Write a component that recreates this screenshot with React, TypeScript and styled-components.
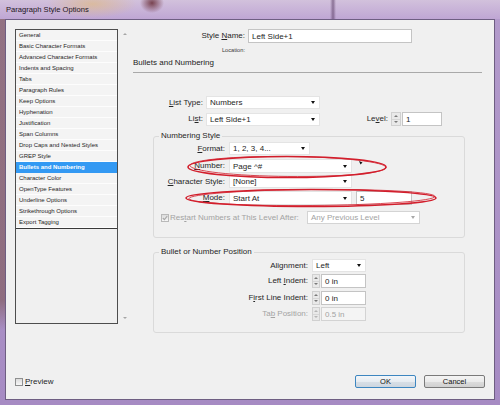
import React from 'react'
import styled, { createGlobalStyle } from 'styled-components'

const GlobalStyle = createGlobalStyle`
  html, body {
    margin: 0;
    padding: 0;
    background: #ffffff;
  }
  body {
    font-family: "Liberation Sans", Arial, sans-serif;
  }
  * {
    box-sizing: border-box;
  }
`

const Window = styled.div`
  position: relative;
  width: 500px;
  height: 405px;
  display: flex;
  flex-direction: column;
  overflow: hidden;
  background:
    linear-gradient(180deg, rgba(120, 80, 70, 0.55) 0px, rgba(120, 80, 70, 0.55) 300px, rgba(120, 80, 70, 0) 330px) left top / 5px 100% no-repeat,
    linear-gradient(180deg, #b39bcb 0%, #a68bc3 100%);
`

const TitleBar = styled.div`
  height: 19px;
  flex-shrink: 0;
  display: flex;
  align-items: center;
  padding-left: 6px;
  font-size: 7.6px;
  color: #1d1420;
  background:
    radial-gradient(ellipse 12px 10px at 152px 3px, rgba(105, 45, 55, 0.85), rgba(105, 45, 55, 0) 100%),
    radial-gradient(ellipse 45px 14px at 92px 4px, rgba(222, 186, 140, 0.75), rgba(222, 186, 140, 0) 100%),
    linear-gradient(90deg, rgba(80, 50, 90, 0) 330px, rgba(80, 50, 90, 0.55) 333px, rgba(80, 50, 90, 0) 336px),
    linear-gradient(180deg, #d2c1dc 0%, #bfa6d4 100%);
`

const Frame = styled.div`
  flex: 1;
  display: flex;
  padding: 0 5px 5px 5px;
`

const Client = styled.div`
  flex: 1;
  display: flex;
  flex-direction: column;
  background: #f0f0f0;
  border: 1px solid #6e5e82;
  padding: 9px 9px 11px 9px;
`

const Main = styled.div`
  flex: 1;
  display: flex;
  align-items: flex-start;
`

/* category list on the left */

const ListColumn = styled.div`
  width: 116px;
  height: 295px;
  display: flex;
  flex-shrink: 0;
`

const ListBox = styled.div`
  width: 103px;
  height: 100%;
  border: 1px solid #4d4d4d;
  background: #f0f0f0;
`

const ListItems = styled.div`
  border-bottom: 1px solid #3a3a3a;
`

const ListItem = styled.div<{ $active?: boolean }>`
  height: 11px;
  line-height: 11px;
  padding-left: 3px;
  font-size: 6px;
  white-space: nowrap;
  overflow: hidden;
  color: ${p => (p.$active ? '#ffffff' : '#1e1e1e')};
  font-weight: ${p => (p.$active ? 700 : 400)};
  background: ${p => (p.$active ? '#3399f3' : '#f4f4f4')};
  box-shadow: inset 0 -1px 0 ${p => (p.$active ? '#3399f3' : '#fdfdfd')};
`

const ScrollTrack = styled.div`
  width: 13px;
  height: 100%;
  display: flex;
  flex-direction: column;
  align-items: center;
  justify-content: space-between;
  padding: 4px 0 5px 0;
`

const ScrollArrow = styled.span<{ $down?: boolean }>`
  width: 0;
  height: 0;
  border-left: 2px solid transparent;
  border-right: 2px solid transparent;
  ${p => (p.$down ? 'border-top' : 'border-bottom')}: 2px solid #a5a5a5;
`

/* form on the right */

const Panel = styled.div`
  width: 349px;
  margin-left: 2px;
  display: flex;
  flex-direction: column;
`

const Row = styled.div<{ $mt?: number; $gap?: number; $pl?: number }>`
  display: flex;
  align-items: center;
  margin-top: ${p => p.$mt ?? 0}px;
  gap: ${p => p.$gap ?? 3}px;
  padding-left: ${p => p.$pl ?? 0}px;
`

const Label = styled.span<{ $w?: number; $muted?: boolean; $left?: boolean; $ml?: number }>`
  width: ${p => (p.$w ? `${p.$w}px` : 'auto')};
  margin-left: ${p => p.$ml ?? 0}px;
  flex-shrink: 0;
  text-align: ${p => (p.$left ? 'left' : 'right')};
  font-size: 8px;
  line-height: 10px;
  white-space: nowrap;
  color: ${p => (p.$muted ? '#a3a3a3' : '#262626')};
`

const SmallNote = styled.span`
  width: 112px;
  text-align: right;
  font-size: 5.7px;
  line-height: 7px;
  color: #3a3a3a;
`

const Key = styled.span`
  text-decoration: underline;
`

const SectionTitle = styled.div`
  margin-top: 4px;
  padding-bottom: 4px;
  border-bottom: 1px solid #a9a9a9;
  font-size: 8px;
  line-height: 10px;
  color: #222222;
`

const Select = styled.div<{ $w: number; $h?: number; $muted?: boolean }>`
  width: ${p => p.$w}px;
  height: ${p => p.$h ?? 13}px;
  flex-shrink: 0;
  display: flex;
  align-items: center;
  justify-content: space-between;
  padding: 0 4px 0 3px;
  background: #ffffff;
  border: 1px solid ${p => (p.$muted ? '#d4d4d4' : '#e4e4e4')};
  font-size: 8px;
  color: ${p => (p.$muted ? '#a3a3a3' : '#1e1e1e')};
  white-space: nowrap;
`

const Caret = styled.span<{ $muted?: boolean }>`
  width: 0;
  height: 0;
  border-left: 2.5px solid transparent;
  border-right: 2.5px solid transparent;
  border-top: 3px solid ${p => (p.$muted ? '#a8a8a8' : '#111111')};
`

const TextBox = styled.div<{ $w: number; $h?: number; $muted?: boolean }>`
  width: ${p => p.$w}px;
  height: ${p => p.$h ?? 14}px;
  flex-shrink: 0;
  display: flex;
  align-items: center;
  padding-left: 3px;
  background: ${p => (p.$muted ? '#f4f4f4' : '#ffffff')};
  border: 1px solid ${p => (p.$muted ? '#d3d3d3' : '#c4c4c4')};
  font-size: 8px;
  color: ${p => (p.$muted ? '#a3a3a3' : '#1e1e1e')};
  white-space: nowrap;
`

const SpinField = styled.div`
  display: flex;
  align-items: center;
  gap: 1px;
`

const Spinner = styled.div<{ $w: number; $h: number }>`
  width: ${p => p.$w}px;
  height: ${p => p.$h}px;
  display: flex;
  flex-direction: column;
  border: 1px solid #d0d0d0;
  background: #e9e9e9;
`

const SpinHalf = styled.div`
  flex: 1;
  display: flex;
  align-items: center;
  justify-content: center;
  & + & {
    border-top: 1px solid #d6d6d6;
  }
`

const SpinArrow = styled.span<{ $down?: boolean; $muted?: boolean }>`
  width: 0;
  height: 0;
  border-left: 2px solid transparent;
  border-right: 2px solid transparent;
  ${p => (p.$down ? 'border-top' : 'border-bottom')}: 2px solid ${p => (p.$muted ? '#b5b5b5' : '#7a7a7a')};
`

const CheckBox = styled.span<{ $muted?: boolean }>`
  width: 8px;
  height: 8px;
  flex-shrink: 0;
  display: flex;
  align-items: center;
  justify-content: center;
  border: 1px solid ${p => (p.$muted ? '#b9b9b9' : '#8e8f8f')};
  background: linear-gradient(180deg, #dcdcdc 0%, #f7f7f7 100%);
`

const Group = styled.fieldset<{ $mt: number; $pb: number }>`
  margin: ${p => p.$mt}px 0 0 20px;
  width: 312px;
  min-inline-size: auto;
  border: 1px solid #dadada;
  border-radius: 3px;
  padding: 0 0 ${p => p.$pb}px 0;
`

const Legend = styled.legend`
  margin-left: 5px;
  padding: 0 2px;
  font-size: 8px;
  line-height: 10px;
  color: #262626;
`

/* buttons along the bottom */

const Footer = styled.div`
  height: 13px;
  display: flex;
  align-items: center;
`

const PreviewToggle = styled.div`
  display: flex;
  align-items: center;
  gap: 2px;
  font-size: 8px;
  color: #262626;
`

const ButtonBar = styled.div`
  margin-left: auto;
  display: flex;
  gap: 8px;
`

const Button = styled.button<{ $default?: boolean }>`
  width: 61px;
  height: 13px;
  padding: 0;
  font-family: inherit;
  font-size: 7.5px;
  line-height: 11px;
  color: #111111;
  border-radius: 2px;
  border: 1px solid ${p => (p.$default ? '#3d86c0' : '#7a7a7a')};
  background: ${p =>
    p.$default
      ? 'linear-gradient(180deg, #f3f6f9 0%, #e7ecf1 50%, #d8dfe6 51%, #cdd6df 100%)'
      : 'linear-gradient(180deg, #f4f4f4 0%, #ebebeb 50%, #dddddd 51%, #d0d0d0 100%)'};
`

const Annotations = styled.svg`
  position: absolute;
  left: 0;
  top: 0;
  pointer-events: none;
`

const categories = [
  'General',
  'Basic Character Formats',
  'Advanced Character Formats',
  'Indents and Spacing',
  'Tabs',
  'Paragraph Rules',
  'Keep Options',
  'Hyphenation',
  'Justification',
  'Span Columns',
  'Drop Caps and Nested Styles',
  'GREP Style',
  'Bullets and Numbering',
  'Character Color',
  'OpenType Features',
  'Underline Options',
  'Strikethrough Options',
  'Export Tagging',
]

const StepField: React.FC<{ spinW: number; w: number; value: string; muted?: boolean }> = ({ spinW, w, value, muted }) => (
  <SpinField>
    <Spinner $w={spinW} $h={14}>
      <SpinHalf><SpinArrow $muted={muted} /></SpinHalf>
      <SpinHalf><SpinArrow $down $muted={muted} /></SpinHalf>
    </Spinner>
    <TextBox $w={w} $muted={muted}>{value}</TextBox>
  </SpinField>
)

export default function App() {
  return (
    <>
      <GlobalStyle />
      <Window>
        <TitleBar>Paragraph Style Options</TitleBar>
        <Frame>
          <Client>
            <Main>
              <ListColumn>
                <ListBox>
                  <ListItems>
                    {categories.map(name => (
                      <ListItem key={name} $active={name === 'Bullets and Numbering'}>
                        {name}
                      </ListItem>
                    ))}
                  </ListItems>
                </ListBox>
                <ScrollTrack>
                  <ScrollArrow />
                  <ScrollArrow $down />
                </ScrollTrack>
              </ListColumn>

              <Panel>
                <Row>
                  <Label $w={112}>Style <Key>N</Key>ame:</Label>
                  <TextBox $w={164}>Left Side+1</TextBox>
                </Row>
                <Row $mt={4}>
                  <SmallNote>Location:</SmallNote>
                </Row>
                <SectionTitle>Bullets and Numbering</SectionTitle>

                <Row $mt={23}>
                  <Label $w={70}><Key>L</Key>ist Type:</Label>
                  <Select $w={114}>Numbers<Caret /></Select>
                </Row>
                <Row $mt={3}>
                  <Label $w={70}>Li<Key>s</Key>t:</Label>
                  <Select $w={114}>Left Side+1<Caret /></Select>
                  <Label $w={22} $ml={43}>Le<Key>v</Key>el:</Label>
                  <StepField spinW={10} w={40} value="1" />
                </Row>

                <Group $mt={5} $pb={13}>
                  <Legend>Numbering Style</Legend>
                  <Row $mt={1} $gap={4}>
                    <Label $w={71}><Key>F</Key>ormat:</Label>
                    <Select $w={81}>1, 2, 3, 4...<Caret /></Select>
                  </Row>
                  <Row $mt={4} $gap={4}>
                    <Label $w={71}><Key>N</Key>umber:</Label>
                    <Select $w={123} $h={14}>Page ^#<Caret /></Select>
                  </Row>
                  <Row $mt={2} $gap={4}>
                    <Label $w={71}><Key>C</Key>haracter Style:</Label>
                    <Select $w={123}>[None]<Caret /></Select>
                  </Row>
                  <Row $mt={3} $gap={4}>
                    <Label $w={71}><Key>M</Key>ode:</Label>
                    <Select $w={123} $h={14}>Start At<Caret /></Select>
                    <TextBox $w={56}>5</TextBox>
                  </Row>
                  <Row $mt={6} $gap={1} $pl={7}>
                    <CheckBox $muted>
                      <svg width="6" height="6" viewBox="0 0 6 6">
                        <polyline points="0.8,3 2.4,4.6 5.2,1.2" fill="none" stroke="#a8a8a8" strokeWidth="1.1" />
                      </svg>
                    </CheckBox>
                    <Label $w={136} $left $muted>Res<Key>t</Key>art Numbers at This Level After:</Label>
                    <Select $w={113} $muted>Any Previous Level<Caret $muted /></Select>
                  </Row>
                </Group>

                <Group $mt={9} $pb={11}>
                  <Legend>Bullet or Number Position</Legend>
                  <Row $mt={2} $gap={4}>
                    <Label $w={154}>Ali<Key>g</Key>nment:</Label>
                    <Select $w={54}>Left<Caret /></Select>
                  </Row>
                  <Row $mt={2} $gap={4}>
                    <Label $w={154}>Left <Key>I</Key>ndent:</Label>
                    <StepField spinW={8} w={45} value="0 in" />
                  </Row>
                  <Row $mt={3} $gap={4}>
                    <Label $w={154}>F<Key>i</Key>rst Line Indent:</Label>
                    <StepField spinW={8} w={45} value="0 in" />
                  </Row>
                  <Row $mt={2} $gap={4}>
                    <Label $w={154} $muted>Ta<Key>b</Key> Position:</Label>
                    <StepField spinW={8} w={45} value="0.5 in" muted />
                  </Row>
                </Group>
              </Panel>
            </Main>

            <Footer>
              <PreviewToggle>
                <CheckBox />
                <span><Key>P</Key>review</span>
              </PreviewToggle>
              <ButtonBar>
                <Button $default>OK</Button>
                <Button>Cancel</Button>
              </ButtonBar>
            </Footer>
          </Client>
        </Frame>

        <Annotations width={500} height={405} viewBox="0 0 500 405">
          <ellipse cx={287} cy={167} rx={99} ry={10.5} fill="none" stroke="#d21e2c" strokeWidth={1.6} />
          <ellipse cx={288} cy={166.5} rx={98} ry={10} fill="none" stroke="#d21e2c" strokeWidth={0.8} transform="rotate(0.6 288 166.5)" />
          <ellipse cx={311} cy={198} rx={125} ry={8.5} fill="none" stroke="#d21e2c" strokeWidth={1.6} />
          <ellipse cx={312} cy={197.5} rx={123} ry={8} fill="none" stroke="#d21e2c" strokeWidth={0.8} transform="rotate(-0.5 312 197.5)" />
          <polygon points="359,161 362.5,162.5 360.5,164.5" fill="#111111" />
        </Annotations>
      </Window>
    </>
  )
}
